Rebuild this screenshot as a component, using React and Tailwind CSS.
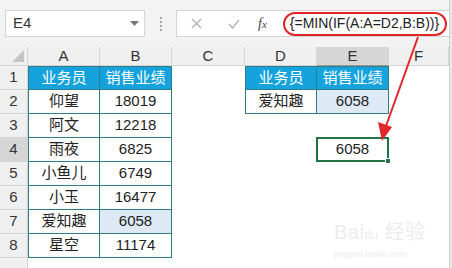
import React from "react";

const cols = ["A", "B", "C", "D", "E", "F"];

const left = [
    ["仰望", "18019"],
    ["阿文", "12218"],
    ["雨夜", "6825"],
    ["小鱼儿", "6749"],
    ["小玉", "16477"],
    ["爱知趣", "6058"],
    ["星空", "11174"],
];

const font = { fontFamily: '"Liberation Sans", "Noto Sans CJK SC", sans-serif' };

function Cell({ children, className = "" }) {
    return (
        <div className={`flex items-center justify-center text-[15px] text-[#222] ${className}`}>
            {children}
        </div>
    );
}

function buildRow(r) {
    // returns cells for columns A..F for row r (1-based)
    const b = "border-[#2e7e88]";
    const cells = [];
    if (r === 1) {
        cells.push(<Cell key="a" className={`bg-[#16a2dd] text-white border-l border-r border-t border-b ${b}`}>业务员</Cell>);
        cells.push(<Cell key="b" className={`bg-[#16a2dd] text-white border-r border-t border-b ${b}`}>销售业绩</Cell>);
    } else if (r <= 8) {
        const [name, val] = left[r - 2];
        const hl = r === 7 ? "bg-[#dde9f5]" : "bg-white";
        cells.push(<Cell key="a" className={`border-l border-r border-b ${b}`}>{name}</Cell>);
        cells.push(<Cell key="b" className={`${hl} border-r border-b ${b}`}>{val}</Cell>);
    } else {
        cells.push(<Cell key="a" />);
        cells.push(<Cell key="b" />);
    }
    cells.push(<Cell key="c" />);
    if (r === 1) {
        cells.push(<Cell key="d" className={`bg-[#16a2dd] text-white border-l border-r border-t border-b ${b}`}>业务员</Cell>);
        cells.push(<Cell key="e" className={`bg-[#16a2dd] text-white border-r border-t border-b ${b}`}>销售业绩</Cell>);
    } else if (r === 2) {
        cells.push(<Cell key="d" className={`border-l border-r border-b ${b}`}>爱知趣</Cell>);
        cells.push(<Cell key="e" className={`bg-[#dde9f5] border-r border-b ${b}`}>6058</Cell>);
    } else if (r === 4) {
        cells.push(<Cell key="d" />);
        cells.push(
            <div key="e" className="relative -ml-px -mt-px flex items-center justify-center border-2 border-[#217346] text-[15px] text-[#222]">
                6058
                <span className="absolute -bottom-[4px] -right-[4px] h-[6px] w-[6px] border border-white bg-[#217346]" />
            </div>
        );
    } else {
        cells.push(<Cell key="d" />);
        cells.push(<Cell key="e" />);
    }
    cells.push(<Cell key="f" />);
    return cells;
}

export default function App() {
    const rows = [1, 2, 3, 4, 5, 6, 7, 8, 9];
    return (
        <div className="relative h-[268px] w-[452px] overflow-hidden bg-white" style={font}>
            {/* formula bar */}
            <div className="flex h-[47px] items-center bg-[#f3f3f3] pl-[5px]">
                <div className="flex h-[27px] w-[140px] items-center justify-between border border-[#d4d4d4] bg-white pl-[7px] pr-[5px] text-[15px] text-[#333]">
                    <span>E4</span>
                    <svg width="9" height="6" viewBox="0 0 9 6"><path d="M0 0h9L4.5 5z" fill="#777" /></svg>
                </div>
                <div className="flex w-[31px] flex-col items-center gap-[2px]">
                    <span className="h-[2px] w-[2px] bg-[#aaa]" />
                    <span className="h-[2px] w-[2px] bg-[#aaa]" />
                    <span className="h-[2px] w-[2px] bg-[#aaa]" />
                    <span className="h-[2px] w-[2px] bg-[#aaa]" />
                </div>
                <div className="flex h-[27px] flex-1 items-center border-y border-l border-[#d4d4d4] bg-white">
                    <svg className="ml-[14px]" width="11" height="11" viewBox="0 0 11 11"><path d="M1 1l9 9M10 1l-9 9" stroke="#b0b0b0" strokeWidth="1.3" /></svg>
                    <svg className="ml-[26px]" width="12" height="10" viewBox="0 0 12 10"><path d="M1 5l3.5 4L11 1" fill="none" stroke="#b0b0b0" strokeWidth="1.3" /></svg>
                    <span className="ml-[18px] text-[14px] italic text-[#444]" style={{ fontFamily: '"Liberation Serif", serif' }}>f<span className="text-[11px]">x</span></span>
                    <span className="ml-[16px] flex h-[24px] items-center rounded-[12px] border-2 border-[#e0262a] pl-[5px] pr-[6px] text-[14px] text-[#222]">
                        {"{=MIN(IF(A:A=D2,B:B))}"}
                    </span>
                </div>
                <div className="h-full w-[3px] border-l border-[#cfcfcf] bg-[#e9e9e9]" />
            </div>

            {/* sheet grid */}
            <div className="grid grid-cols-[28px_72px_72px_73px_72px_72px_60px_3px] grid-rows-[19px_repeat(9,24px)]">
                <div className="relative border-b border-r border-[#d4d4d4] bg-[#f0f0f0]">
                    <svg className="absolute bottom-[3px] right-[3px]" width="12" height="12" viewBox="0 0 12 12"><path d="M12 0v12H0z" fill="#c6c6c6" /></svg>
                </div>
                {cols.map((c) => (
                    <div
                        key={c}
                        className={`flex items-center justify-center border-b border-r text-[15px] ${c === "E" ? "border-b-[#9a9a9a] bg-[#d6d6d6] text-[#333]" : "bg-[#f0f0f0] text-[#333]"} border-[#d4d4d4]`}
                    >
                        {c}
                    </div>
                ))}
                <div className="row-span-10 border-l border-[#cfcfcf] bg-[#e9e9e9]" />
                {rows.map((r) => (
                    <React.Fragment key={r}>
                        <div className={`flex items-end justify-center border-b border-r border-[#d4d4d4] pb-[1px] text-[15px] text-[#333] ${r === 4 ? "bg-[#d6d6d6]" : "bg-[#f0f0f0]"}`}>
                            {r <= 8 ? r : ""}
                        </div>
                        {buildRow(r)}
                    </React.Fragment>
                ))}
            </div>

            {/* red arrow */}
            <svg className="pointer-events-none absolute left-0 top-0" width="452" height="268">
                <line x1="418" y1="37" x2="386" y2="126" stroke="#e0262a" strokeWidth="2" />
                <path d="M382 141 L378 122 L392 127 Z" fill="#e0262a" />
            </svg>

            {/* watermark */}
            <div className="pointer-events-none absolute left-[334px] top-[222px] flex flex-col items-start text-[#ececec]">
                <span className="text-[20px] leading-none tracking-wide">Bai<span className="text-[12px]">du</span> 经验</span>
                <span className="mt-[8px] text-[9px] leading-none">jingyan.baidu.com</span>
            </div>
        </div>
    );
}
